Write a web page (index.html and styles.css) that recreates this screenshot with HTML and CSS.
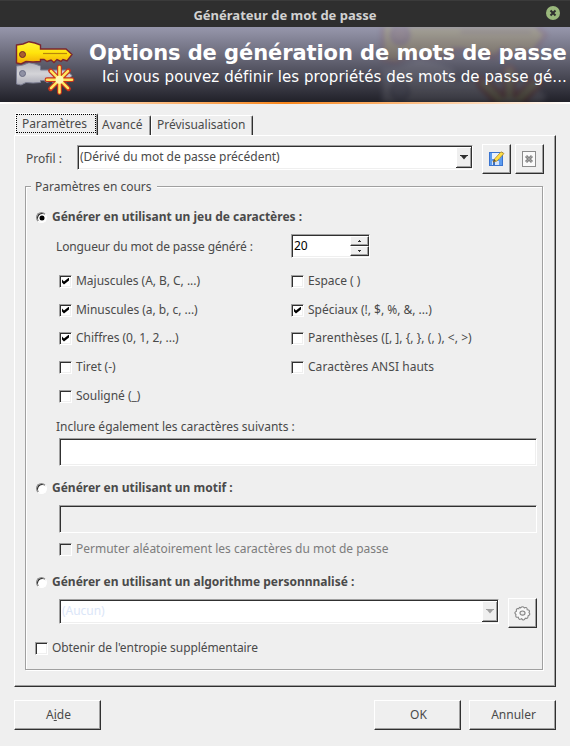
FILE: index.html
```html
<!DOCTYPE html>
<html lang="fr">
<head>
<meta charset="utf-8">
<title>Générateur de mot de passe</title>
<link rel="stylesheet" href="styles.css">
</head>
<body>
<svg width="0" height="0" class="defs">
  <defs>
    <linearGradient id="gold" x1="0" y1="0" x2="0" y2="1"><stop offset="0" stop-color="#fff23a"/><stop offset=".5" stop-color="#ffe40c"/><stop offset="1" stop-color="#f0a808"/></linearGradient>
    <linearGradient id="silver" x1="0" y1="0" x2="0" y2="1"><stop offset="0" stop-color="#b4b4bc"/><stop offset=".5" stop-color="#d4d4d8"/><stop offset="1" stop-color="#a8a8b4"/></linearGradient>
    <path id="key" d="M1.500 4 L8 3 L14 .700 L20 2 L25.500 4 V8 H51 L57 13.500 L52 20 L48 18.500 L46 20.500 L42 18.500 L39 21.500 L36 19 L32 20.500 L29 18.500 H25.500 V20.500 L18 21 L11 20.500 L6 23 L1.500 22 Z"/>
    <g id="keys">
      <use href="#key" x="0" y="21" fill="url(#silver)" stroke="#7c7e92" stroke-width="1"/>
      <circle cx="7.500" cy="32.500" r="3" fill="#8f91a4" stroke="#686b82"/>
      <use href="#key" fill="url(#gold)" stroke="#7b2630" stroke-width="1.400"/>
      <path d="M28 12.500H52" stroke="#b8860c" stroke-width="1.200"/>
      <circle cx="7.500" cy="13.500" r="3" fill="#a85e30" stroke="#70282c"/>
      <path d="M44.500 26V51.500M32 38.700H57M35.500 29.700L53.500 47.700M53.500 29.700L35.500 47.700" fill="none" stroke="#c8331c" stroke-width="4.800" stroke-linecap="round"/>
      <path d="M44.500 26V51.500M32 38.700H57M36 30.200L53 47.200M53 30.200L36 47.200" fill="none" stroke="#ffe760" stroke-width="2.600" stroke-linecap="round"/>
      <circle cx="44.500" cy="38.700" r="4" fill="#fff6b0"/>
    </g>
  </defs>
</svg>
<div class="window">
  <header class="titlebar">
    <span class="title">Générateur de mot de passe</span>
    <svg class="close" width="14" height="14" viewBox="0 0 14 14"><circle cx="7" cy="7" r="7" fill="#9ab87c"/><path d="M4.500 4.500L9.500 9.500M9.500 4.500L4.500 9.500" stroke="#2f2f2f" stroke-width="2"/></svg>
  </header>
  <div class="banner">
    <svg class="ghost" width="190" height="75" viewBox="0 0 190 75"><use href="#keys" transform="translate(-2 -32) scale(2.950)"/></svg>
    <svg class="logo" width="60" height="56" viewBox="0 0 60 56"><use href="#keys"/></svg>
    <div class="heading">
      <h1>Options de génération de mots de passe</h1>
      <p>Ici vous pouvez définir les propriétés des mots de passe gé...</p>
    </div>
  </div>
  <div class="stripe"></div>
  <main>
    <nav class="tabs">
      <div class="tab active"><span>Paramètres</span></div>
      <div class="tab tab-av"><span>Avancé</span></div>
      <div class="tab tab-pre"><span>Prévisualisation</span></div>
    </nav>
    <section class="page">
      <div class="profile">
        <label>Profil :</label>
        <div class="combo sunken"><span>(Dérivé du mot de passe précédent)</span><i class="drop"><svg width="10" height="5" viewBox="0 0 10 5"><path d="M1 0H9V1H8L5 4.500L2 1H1Z" fill="#303030"/></svg></i></div>
        <button class="icon raised"><svg width="16" height="16" viewBox="0 0 16 16"><rect x=".5" y="1.500" width="13" height="13" fill="#5c9cf0" stroke="#3a74d0"/><rect x="3" y="2" width="8" height="6" fill="#eaf2fc"/><path d="M3 14V10H10V14" fill="#d5e3f8"/><path d="M4 11h2v3H4z" fill="#3c6ebd"/><path d="M4 11L5.500 8L12 .800L15 2.500L8 10Z" fill="#ffdf45" stroke="#a67b21" stroke-width=".7"/><path d="M4 11L5 8L7 10Z" fill="#594a3a"/></svg></button>
        <button class="icon raised del"><svg width="14" height="16" viewBox="0 0 14 16"><rect x=".5" y=".5" width="13" height="15" fill="#fafafa" stroke="#8c8c8c"/><path d="M4 5L10 11M10 5L4 11" stroke="#858585" stroke-width="3"/><path d="M4 5L10 11M10 5L4 11" stroke="#aaa" stroke-width=".8"/></svg></button>
      </div>
      <fieldset>
        <legend>Paramètres en cours</legend>
        <div class="row r-charset"><i class="radio on"></i><b>Générer en utilisant un jeu de caractères :</b></div>
        <div class="row r-length"><span class="t-len">Longueur du mot de passe généré :</span>
          <div class="spin sunken"><span>20</span><div class="arrows"><i class="raised"><svg width="3" height="2"><path d="M1 0h1v1h1v1H0V1h1z" fill="#303030"/></svg></i><i class="raised"><svg width="3" height="2"><path d="M0 0h3v1H2v1H1V1H0z" fill="#303030"/></svg></i></div></div>
        </div>
        <div class="checks">
          <label><i class="box on"></i>Majuscules (A, B, C, ...)</label><label><i class="box"></i>Espace ( )</label>
          <label><i class="box on"></i>Minuscules (a, b, c, ...)</label><label><i class="box on"></i>Spéciaux (!, $, %, &amp;, ...)</label>
          <label><i class="box on"></i>Chiffres (0, 1, 2, ...)</label><label class="wide"><i class="box"></i>Parenthèses ([, ], {, }, (, ), &lt;, &gt;)</label>
          <label><i class="box"></i>Tiret (-)</label><label class="wide"><i class="box"></i>Caractères ANSI hauts</label>
          <label><i class="box"></i>Souligné (_)</label>
        </div>
        <div class="row r-also"><span>Inclure également les caractères suivants :</span></div>
        <div class="field sunken"></div>
        <div class="row r-pattern"><i class="radio"></i><b>Générer en utilisant un motif :</b></div>
        <div class="field sunken disabled"></div>
        <div class="row r-permute"><i class="box off"></i>Permuter aléatoirement les caractères du mot de passe</div>
        <div class="row r-algo"><i class="radio"></i><b>Générer en utilisant un algorithme personnnalisé :</b></div>
        <div class="algo">
          <div class="combo sunken none"><span>(Aucun)</span><i class="drop"><svg width="10" height="5" viewBox="0 0 10 5"><path d="M1 0H9V1H8L5 4.500L2 1H1Z" fill="#a0a0a0"/></svg></i></div>
          <button class="icon raised"><svg width="17" height="15" viewBox="0 0 18 16"><path d="M7 2Q9 -.5 11 2Q14 .5 14 4Q17.500 4 16 7Q18 9 15 10.500Q15 14 12 13Q10 16.500 8 13.500Q5 15.500 4.500 12Q1 12.500 2 9Q-.5 7 2.500 5.500Q2 2 5 3Q5.500 .5 7 2Z" fill="#f8f8f8" stroke="#868686" stroke-width="1.200"/><ellipse cx="9" cy="7.500" rx="2.700" ry="2.200" fill="#eee" stroke="#868686" stroke-width="1.200"/></svg></button>
        </div>
        <div class="row r-entropy"><i class="box"></i><span>Obtenir de l'entropie supplémentaire</span></div>
      </fieldset>
    </section>
    <footer><button class="push raised help">A<u>i</u>de</button><button class="push raised">OK</button><button class="push raised">Annuler</button></footer>
  </main>
</div>
</body>
</html>
```
FILE: styles.css
```css
* { box-sizing: border-box; }
body { margin: 0; background: #efefef; color: #4a4a4a; font: 12px/18px "Noto Sans", sans-serif; overflow: hidden; }
i { font-style: normal; }
svg { display: block; flex: none; }
.defs { position: absolute; }
.window { width: 570px; height: 746px; }
.titlebar { position: relative; display: flex; align-items: center; justify-content: center; height: 27px; padding-top: 1px; background: #2f2f2f; border-top: 1px solid #3b3b3b; color: #d2d2d2; font-size: 13px; font-weight: 700; }
.close { position: absolute; right: 10px; top: 5px; }
.banner { position: relative; display: flex; height: 75px; overflow: hidden; background: linear-gradient(#9797ac, #212129); color: #fff; font-family: "DejaVu Sans", sans-serif; }
.ghost { position: absolute; left: 380px; top: 0; opacity: .12; filter: blur(2px); }
.logo { position: relative; margin: 14px 0 0 15px; }
.heading { position: relative; margin-left: 14px; white-space: nowrap; }
h1 { margin: 13px 0 0; font-size: 21px; line-height: 26px; letter-spacing: -.08px; }
p { margin: 1px 0 0 13px; font-size: 15px; line-height: 21px; letter-spacing: .09px; }
.stripe { height: 2px; background: linear-gradient(90deg, #fff, #f8861c 50%, #fff); }
main { padding: 9px 14px 0; }
.tabs { display: flex; align-items: flex-end; height: 22px; padding-left: 1px; }
.tab { height: 20px; padding-left: 4px; border: 1px solid #fff; border-bottom: 0; border-right-color: #303030; box-shadow: inset -1px 0 #a0a0a0; border-radius: 2px 2px 0 0; white-space: nowrap; }
.tab.active { height: 22px; width: 83px; padding: 0 1px 2px 0; }
.active span { display: block; height: 19px; padding-left: 5px; border: 1px dotted #000; line-height: 17px; }
.tab-av { width: 53px; border-left: 0; }
.tab-pre { width: 102px; padding-left: 5px; }
.page { height: 552px; padding: 8px 12px 0 10px; border: 1px solid #fff; border-right-color: #303030; border-bottom-color: #303030; box-shadow: inset -1px -1px #a0a0a0; }
.sunken { background: #fff; border: 1px solid #fff; border-top-color: #a0a0a0; border-left-color: #a0a0a0; box-shadow: inset 1px 1px #303030, inset -1px -1px #efefef; }
.raised { background: #efefef; border: 1px solid #303030; border-top-color: #fff; border-left-color: #fff; box-shadow: inset -1px -1px #a0a0a0; }
button { display: flex; align-items: center; justify-content: center; padding: 0; color: inherit; font: inherit; border-radius: 0; }
.profile { display: flex; height: 30px; }
.profile label { flex: none; width: 52px; padding: 6px 0 0 1px; }
.combo { display: flex; justify-content: space-between; flex: none; width: 396px; height: 25px; margin-top: 1px; padding: 2px 0 2px 2px; line-height: 18px; letter-spacing: -.03px; }
.combo span { white-space: nowrap; }
.drop { display: flex; align-items: center; justify-content: center; width: 16px; height: 21px; margin-top: -1px; background: #efefef; border-right: 1px solid #303030; border-bottom: 1px solid #303030; box-shadow: inset 1px 1px #fff, inset -1px -1px #a0a0a0; }
.icon { flex: none; width: 29px; height: 30px; margin-left: 9px; }
.del { margin-left: 4px; padding-right: 1px; }
fieldset { position: relative; height: 484px; min-width: 0; margin: 12px 0 0; padding: 20px 0 0 9px; border: 1px solid #a0a0a0; box-shadow: 1px 1px #fff, inset 1px 1px #fff; }
legend { position: absolute; left: 5px; top: -9px; padding: 0 5px 0 4px; background: #efefef; height: 18px; }
.row { display: flex; align-items: center; height: 20px; white-space: nowrap; }
.radio { flex: none; position: relative; width: 11px; height: 11px; margin: 0 5px 0 1px; border-radius: 50%; background: #fff; border: 1px solid #fff; border-top-color: #8c8c8c; border-left-color: #8c8c8c; box-shadow: inset 1px 1px #303030; }
.radio.on::after { content: ""; position: absolute; left: 3px; top: 3px; width: 4px; height: 4px; border-radius: 50%; background: #000; box-shadow: 0 0 0 .500px #000; }
.box { flex: none; width: 13px; height: 13px; margin-right: 4px; background: #fff; border: 1px solid #fff; border-top-color: #a0a0a0; border-left-color: #a0a0a0; box-shadow: inset 1px 1px #303030, inset -1px -1px #efefef; }
.box.on::after { content: ""; display: block; width: 7px; height: 7px; margin: 2px; background: #000; clip-path: polygon(0 28%, 28% 57%, 100% 0, 100% 43%, 28% 100%, 0 72%); }
.off { background: #efefef; }
.r-length { height: 25px; margin-top: 7px; padding-left: 21px; }
.t-len { width: 235px; letter-spacing: -.12px; }
.spin { display: flex; justify-content: space-between; width: 79px; height: 24px; margin-top: -1px; padding: 1px 0 1px 1px; color: #000; line-height: 20px; }
.spin > span { padding-left: 1px; }
.arrows { width: 19px; }
.arrows i { display: flex; align-items: center; justify-content: center; height: 10px; }
.checks { display: grid; grid-template-columns: 232px 1fr; grid-template-rows: 29px 28px 29px 29px 26px; margin-top: 12px; padding-left: 24px; letter-spacing: -.02px; }
.checks label { display: flex; align-items: center; height: 20px; white-space: nowrap; }
.checks .wide { letter-spacing: .04px; }
.r-also { margin-top: 5px; padding-left: 21px; }
.field { width: 478px; height: 28px; margin: 1px 0 0 24px; }
.r-pattern { margin-top: 12px; }
.field.disabled { margin-top: 7px; background: #efefef; }
.r-permute { margin: 6px 0 0 24px; color: #7c7c7c; }
.r-algo { margin-top: 13px; }
.algo { display: flex; margin: 6px 0 0 24px; }
.none { width: 440px; color: #dbe6f8; }
.r-entropy { margin-top: 10px; letter-spacing: -.07px; }
footer { display: flex; gap: 8px; margin-top: 13px; }
.push { width: 87px; height: 30px; padding-left: 2px; }
.help { margin-right: auto; }
```
